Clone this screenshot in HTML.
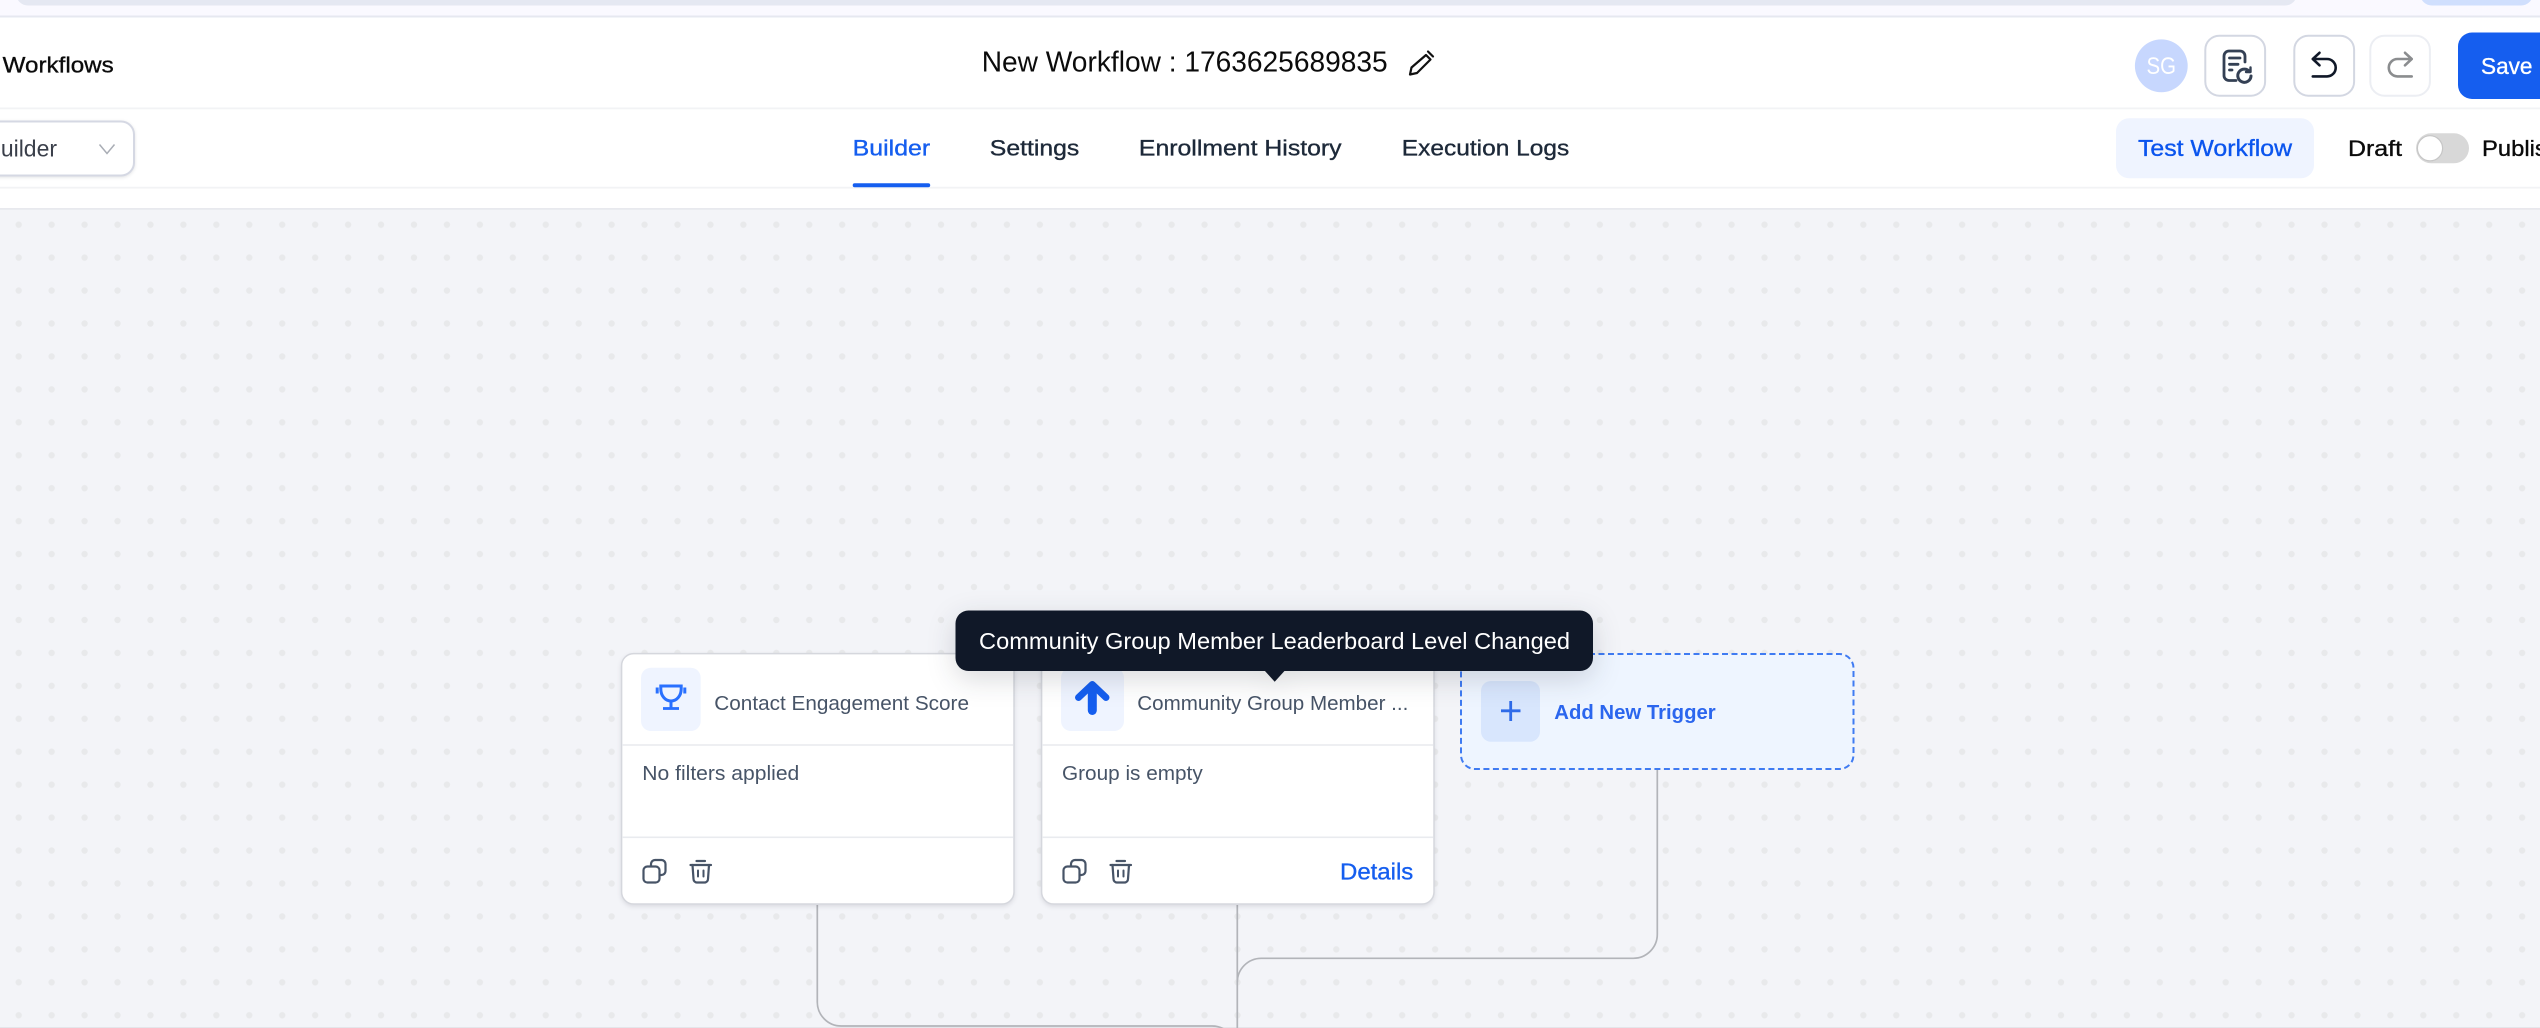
<!DOCTYPE html>
<html><head><meta charset="utf-8"><title>New Workflow</title>
<style>
html,body{margin:0;padding:0;background:#fff;width:2540px;height:1028px;overflow:hidden}
svg{display:block;filter:blur(.35px)}
text{font-family:"Liberation Sans",sans-serif}
.m{stroke-width:.35px}
</style></head><body>
<svg xmlns="http://www.w3.org/2000/svg" width="2540" height="1028" viewBox="0 0 2540 1028">
<defs>
<pattern id="d" patternUnits="userSpaceOnUse" x="2.23" y="208.23" width="32.94" height="32.94"><circle cx="16.47" cy="16.47" r="3.2" fill="#e8e9eb"/></pattern>
</defs>
<rect width="2540" height="1028" fill="#fff"/>
<!-- top strip -->
<rect width="2540" height="16" fill="#faf9ff"/>
<rect x="16" y="-20" width="2281" height="25.5" rx="12" fill="#e5e8f2"/>
<rect x="2420" y="-20" width="113" height="25.5" rx="12" fill="#d0dffd"/>
<rect y="15.5" width="2540" height="2" fill="#e6e8f0"/>
<!-- borders -->
<rect y="107.5" width="2540" height="1.8" fill="#f2f3f5"/>
<rect y="186.8" width="2540" height="1.8" fill="#f2f3f5"/>
<!-- canvas -->
<rect y="209" width="2540" height="819" fill="#f3f4f8"/>
<rect y="209" width="2540" height="819" fill="url(#d)"/>
<rect y="208" width="2540" height="1.8" fill="#e8e9ee"/>
<rect y="1027" width="2540" height="1" fill="#e4e5ea"/>

<!-- header -->
<text x="2.7" y="72.5" font-size="22" fill="#0b0b0b" stroke="#0b0b0b" class="m" textLength="111" lengthAdjust="spacingAndGlyphs">Workflows</text>
<text x="981.7" y="71.5" font-size="28.5" fill="#0b0b0b" textLength="406" lengthAdjust="spacingAndGlyphs">New Workflow : 1763625689835</text>
<g fill="none" stroke="#111" stroke-width="2.2" stroke-linejoin="round" stroke-linecap="round">
<path d="M1410 74.5L1411.5 67.5L1426 55L1430.5 59.5L1417 73Z"/>
<path d="M1428 51.5L1433 56.5"/>
</g>
<circle cx="2161.3" cy="65.8" r="26.4" fill="#c7d7fe"/>
<text x="2146.5" y="74" font-size="24" fill="#fff" textLength="29.5" lengthAdjust="spacingAndGlyphs">SG</text>
<rect x="2205.3" y="35.7" width="59.8" height="60" rx="14" fill="#fff" stroke="#d3d7e2" stroke-width="2"/>
<rect x="2294.3" y="35.7" width="59.8" height="60" rx="14" fill="#fff" stroke="#d3d7e2" stroke-width="2"/>
<rect x="2370.3" y="35.7" width="59.6" height="60" rx="14" fill="#fff" stroke="#eceef3" stroke-width="2"/>
<g fill="none" stroke="#344054" stroke-width="2.8" stroke-linecap="round" stroke-linejoin="round">
<path d="M2245 62V56a5 5 0 0 0-5-5H2229a5 5 0 0 0-5 5V75.5a5 5 0 0 0 5 5H2236"/>
<path d="M2229.5 58H2240M2229.5 64.3H2238M2229.5 70H2232"/>
<path d="M2249.5 71.5A6.6 6.6 0 1 0 2251 76" stroke-width="3"/>
<path d="M2250.5 67.5V72H2246" stroke-width="2.4"/>
</g>
<g fill="none" stroke="#101828" stroke-width="2.6" stroke-linecap="round" stroke-linejoin="round">
<path d="M2319.5 52.8L2312.8 59L2319.5 65.3M2312.8 59H2327A8.7 8.7 0 0 1 2327 76.4H2312.8"/>
</g>
<g fill="none" stroke="#8b8d8f" stroke-width="2.6" stroke-linecap="round" stroke-linejoin="round">
<path d="M2405 52.8L2411.7 59L2405 65.3M2411.7 59H2397.5A8.7 8.7 0 0 0 2397.5 76.4H2411.7"/>
</g>
<rect x="2458" y="32.5" width="110" height="66.5" rx="14" fill="#155eef"/>
<text x="2481" y="74" font-size="23" fill="#fff" stroke="#fff" class="m" textLength="51.5" lengthAdjust="spacingAndGlyphs">Save</text>

<!-- sub bar -->
<rect x="-30" y="121.5" width="164" height="54" rx="13" fill="#fff" stroke="#d5d8e3" stroke-width="2" style="filter:drop-shadow(0 1px 1.5px rgba(16,24,40,.12))"/>
<text x="-14.5" y="156.5" font-size="23" fill="#3a3f4a" textLength="71.5" lengthAdjust="spacingAndGlyphs">Builder</text>
<path d="M99.5 144.5L107 153.5L114.5 144.5" fill="none" stroke="#a9adb5" stroke-width="1.5"/>
<text x="852.7" y="155.3" font-size="22" fill="#155eef" stroke="#155eef" class="m" textLength="77.5" lengthAdjust="spacingAndGlyphs">Builder</text>
<rect x="852.7" y="183.3" width="77.5" height="4" rx="2" fill="#155eef"/>
<text x="989.8" y="155.3" font-size="22" fill="#1d2939" stroke="#1d2939" class="m" textLength="89.5" lengthAdjust="spacingAndGlyphs">Settings</text>
<text x="1138.9" y="155.3" font-size="22" fill="#1d2939" stroke="#1d2939" class="m" textLength="202.7" lengthAdjust="spacingAndGlyphs">Enrollment History</text>
<text x="1401.8" y="155.3" font-size="22" fill="#1d2939" stroke="#1d2939" class="m" textLength="167.4" lengthAdjust="spacingAndGlyphs">Execution Logs</text>
<rect x="2116" y="118.3" width="198" height="60" rx="13" fill="#eff4ff"/>
<text x="2138" y="156" font-size="23" fill="#0b55ee" stroke="#0b55ee" class="m" textLength="154" lengthAdjust="spacingAndGlyphs">Test Workflow</text>
<text x="2348" y="156" font-size="22.5" fill="#0b0b0b" stroke="#0b0b0b" class="m" textLength="54" lengthAdjust="spacingAndGlyphs">Draft</text>
<rect x="2416" y="133.3" width="53" height="30" rx="15" fill="#d8d8d8"/>
<circle cx="2430" cy="148.3" r="12.6" fill="#fff" stroke="#c6c6c6" stroke-width="1.2"/>
<text x="2482" y="156" font-size="22.5" fill="#0b0b0b" stroke="#0b0b0b" class="m" textLength="78" lengthAdjust="spacingAndGlyphs">Publish</text>

<!-- connectors -->
<g fill="none" stroke="#b2b4b9" stroke-width="1.7">
<path d="M817.3 905V1002a24 24 0 0 0 24 24H1212a24 24 0 0 1 24 24"/>
<path d="M1237.3 905V1028"/>
<path d="M1657.3 770V934.3a24 24 0 0 1-24 24H1261.3a24 24 0 0 0-24 24"/>
</g>

<!-- card 1 -->
<g style="filter:drop-shadow(0 2px 2px rgba(16,24,40,.1))">
<rect x="621.6" y="653.6" width="392.4" height="250.4" rx="12" fill="#fff" stroke="#d5d7dd" stroke-width="1.5"/>
</g>
<rect x="622" y="744.2" width="391.5" height="1.6" fill="#e9ebef"/>
<rect x="622" y="836.5" width="391.5" height="1.6" fill="#e9ebef"/>
<rect x="641" y="667.7" width="59.7" height="63.3" rx="10" fill="#eff4ff"/>
<g fill="none" stroke="#2970ff" stroke-width="3">
<path d="M660.8 686H681.2V689C681.2 696 676.5 701 671 701C665.5 701 660.8 696 660.8 689Z"/>
<path d="M671 701V708"/>
<path d="M663 708.5H679" stroke-width="2.8"/>
<path d="M657.2 687.5V693.5M684.8 687.5V693.5" stroke-width="3"/>
</g>
<text x="714.3" y="710" font-size="20.5" fill="#475467" textLength="254.7" lengthAdjust="spacingAndGlyphs">Contact Engagement Score</text>
<text x="642.3" y="780" font-size="20.5" fill="#475467" textLength="157" lengthAdjust="spacingAndGlyphs">No filters applied</text>
<g fill="none" stroke="#475467" stroke-width="2.2" stroke-linecap="round" stroke-linejoin="round">
<rect x="643.5" y="866.5" width="16" height="16" rx="3.8"/>
<path d="M651 866V864a4 4 0 0 1 4-4H661.5a4 4 0 0 1 4 4V871a4 4 0 0 1-4 4H660"/>
<path d="M690.5 865H711M696.5 861H705"/>
<path d="M692.5 865L693.5 879a3.5 3.5 0 0 0 3.5 3.5H704.5a3.5 3.5 0 0 0 3.5-3.5L709 865"/>
<path d="M698 870.5V876.5M703.5 870.5V876.5" stroke-width="2"/>
</g>

<!-- card 2 -->
<g style="filter:drop-shadow(0 2px 2px rgba(16,24,40,.1))">
<rect x="1041.6" y="653.6" width="392.4" height="250.4" rx="12" fill="#fff" stroke="#d5d7dd" stroke-width="1.5"/>
</g>
<rect x="1042" y="744.2" width="391.5" height="1.6" fill="#e9ebef"/>
<rect x="1042" y="836.5" width="391.5" height="1.6" fill="#e9ebef"/>
<rect x="1061" y="667.7" width="63" height="63.3" rx="10" fill="#eff4ff"/>
<g fill="none" stroke="#155eef" stroke-linecap="round" stroke-linejoin="round">
<path d="M1078.5 697.5L1092.3 684.5L1106 697.5" stroke-width="7"/>
<path d="M1092.3 690V710.5" stroke-width="9"/>
</g>
<text x="1137.3" y="710" font-size="20.5" fill="#475467" textLength="271" lengthAdjust="spacingAndGlyphs">Community Group Member ...</text>
<text x="1062" y="780" font-size="20.5" fill="#475467" textLength="140.7" lengthAdjust="spacingAndGlyphs">Group is empty</text>
<g transform="translate(420 0)" fill="none" stroke="#475467" stroke-width="2.2" stroke-linecap="round" stroke-linejoin="round">
<rect x="643.5" y="866.5" width="16" height="16" rx="3.8"/>
<path d="M651 866V864a4 4 0 0 1 4-4H661.5a4 4 0 0 1 4 4V871a4 4 0 0 1-4 4H660"/>
<path d="M690.5 865H711M696.5 861H705"/>
<path d="M692.5 865L693.5 879a3.5 3.5 0 0 0 3.5 3.5H704.5a3.5 3.5 0 0 0 3.5-3.5L709 865"/>
<path d="M698 870.5V876.5M703.5 870.5V876.5" stroke-width="2"/>
</g>
<text x="1340" y="879.3" font-size="23.5" fill="#155eef" stroke="#155eef" class="m" textLength="73.3" lengthAdjust="spacingAndGlyphs">Details</text>

<!-- add trigger -->
<rect x="1461" y="654" width="392.5" height="115" rx="14" fill="#eef5ff" stroke="#3f7bf2" stroke-width="2" stroke-dasharray="6 3.5"/>
<rect x="1481" y="681" width="59" height="60.7" rx="10" fill="#d8e6fd"/>
<path d="M1510.7 701V721M1501 710.8H1520.5" fill="none" stroke="#2f6be8" stroke-width="2.8"/>
<text x="1554.3" y="719" font-size="20" font-weight="700" fill="#2b66ee" textLength="161.4" lengthAdjust="spacingAndGlyphs">Add New Trigger</text>

<!-- tooltip -->
<g style="filter:drop-shadow(0 8px 14px rgba(16,24,40,.16))">
<rect x="955.5" y="610.5" width="637.5" height="60.5" rx="13" fill="#101828"/>
<path d="M1264.5 670.5L1274.7 681.7L1284.9 670.5Z" fill="#101828"/>
</g>
<text x="979" y="649" font-size="23.5" fill="#fff" textLength="591" lengthAdjust="spacingAndGlyphs">Community Group Member Leaderboard Level Changed</text>
</svg>
</body></html>
